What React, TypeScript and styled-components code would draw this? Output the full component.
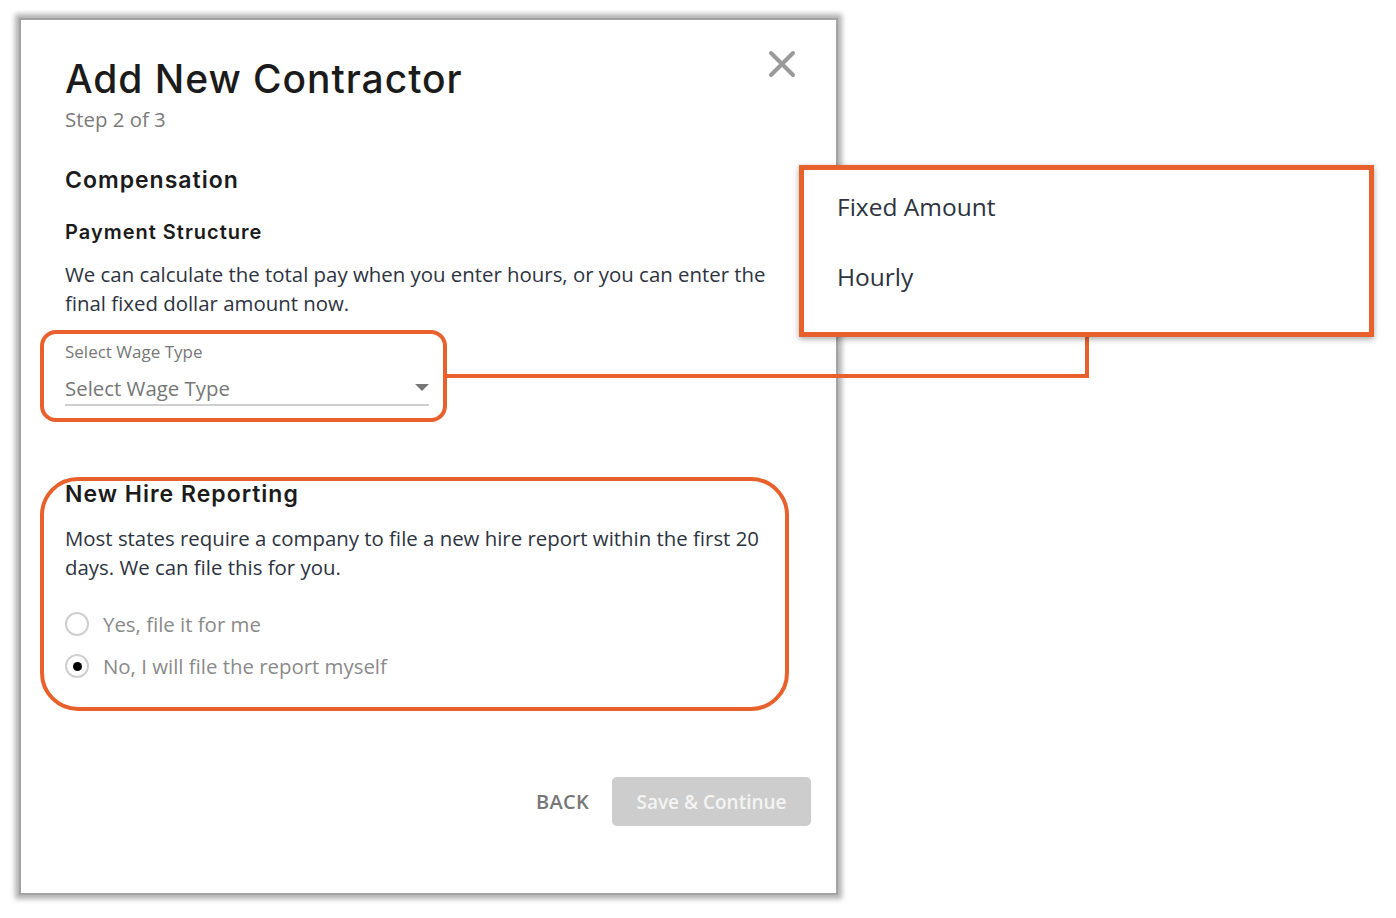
import styled, { createGlobalStyle } from 'styled-components';

const ORANGE = '#e8612c';

const GlobalStyle = createGlobalStyle`
  html, body {
    margin: 0;
    padding: 0;
    background: #ffffff;
  }
  body {
    font-family: 'Open Sans', 'Noto Sans', sans-serif;
  }
`;

export default function App() {
  return (
    <StyledPage>
      <GlobalStyle />
      <StyledModal>
        <StyledHeader>
          <div>
            <StyledTitle>Add New Contractor</StyledTitle>
            <StyledStep>Step 2 of 3</StyledStep>
          </div>
          <StyledClose aria-label="Close">
            <svg width="28" height="28" viewBox="0 0 28 28">
              <path
                d="M3 3 L25 25 M25 3 L3 25"
                stroke="#9a9a9a"
                strokeWidth="4"
                strokeLinecap="round"
              />
            </svg>
          </StyledClose>
        </StyledHeader>

        <StyledSectionTitle>Compensation</StyledSectionTitle>
        <StyledSubTitle>Payment Structure</StyledSubTitle>
        <StyledText>
          We can calculate the total pay when you enter hours, or you can enter
          the final fixed dollar amount now.
        </StyledText>

        <StyledSelect>
          <span className="label">Select Wage Type</span>
          <div className="value">
            <span>Select Wage Type</span>
            <svg width="14" height="8" viewBox="0 0 14 8">
              <path d="M0 0 L14 0 L7 7 Z" fill="#777" />
            </svg>
          </div>
        </StyledSelect>

        <StyledHireSection>
          <StyledSectionTitle as="h3" className="hire">
            New Hire Reporting
          </StyledSectionTitle>
          <StyledText>
            Most states require a company to file a new hire report within the
            first 20 days. We can file this for you.
          </StyledText>
          <StyledRadios>
            <StyledRadio>
              <StyledDot />
              Yes, file it for me
            </StyledRadio>
            <StyledRadio>
              <StyledDot checked />
              No, I will file the report myself
            </StyledRadio>
          </StyledRadios>
        </StyledHireSection>

        <StyledActions>
          <StyledBack>BACK</StyledBack>
          <StyledSave disabled>Save &amp; Continue</StyledSave>
        </StyledActions>
      </StyledModal>

      <StyledCallout left={40} top={330} width={407} height={92} radius={16} />
      <StyledCallout left={40} top={477} width={749} height={234} radius={38} />
      <StyledConnector />
      <StyledMenu>
        <li>Fixed Amount</li>
        <li>Hourly</li>
      </StyledMenu>
    </StyledPage>
  );
}

const StyledPage = styled.div`
  position: relative;
  width: 1396px;
  height: 918px;
  padding: 20px 0 0 21px;
  box-sizing: border-box;
  overflow: hidden;
`;

const StyledModal = styled.div`
  width: 815px;
  height: 873px;
  box-sizing: border-box;
  background: #ffffff;
  box-shadow: 0 0 0 2px #a3a3a3, 0 0 5px 6px rgba(0, 0, 0, 0.3);
  padding: 34px 25px 0 44px;
  display: flex;
  flex-direction: column;
  color: #2d3340;
`;

const StyledHeader = styled.div`
  display: flex;
  justify-content: space-between;
  align-items: flex-start;
`;

const StyledTitle = styled.h1`
  margin: 0;
  font-family: Inter, 'Noto Sans', sans-serif;
  font-weight: 500;
  font-size: 39px;
  line-height: 50px;
  letter-spacing: 0.95px;
  color: #1b1b1b;
`;

const StyledStep = styled.p`
  margin: 1px 0 0;
  font-size: 20.4px;
  line-height: 28px;
  color: #7a7a7a;
`;

const StyledClose = styled.button`
  border: none;
  background: none;
  padding: 0;
  margin: -4px 15px 0 0;
  width: 28px;
  height: 28px;
  cursor: pointer;
`;

const StyledSectionTitle = styled.h2`
  margin: 32px 0 0;
  font-family: Inter, 'Noto Sans', sans-serif;
  font-weight: 600;
  font-size: 23px;
  line-height: 30px;
  letter-spacing: 1px;
  color: #1b1b1b;

  &.hire {
    margin: 0;
  }
`;

const StyledSubTitle = styled.h3`
  margin: 24px 0 0;
  font-family: Inter, 'Noto Sans', sans-serif;
  font-weight: 600;
  font-size: 20px;
  line-height: 26px;
  letter-spacing: 1px;
  color: #1b1b1b;
`;

const StyledText = styled.p`
  margin: 15px 0 0;
  font-size: 20.4px;
  line-height: 29px;
  color: #2d3340;
  max-width: 712px;
`;

const StyledSelect = styled.div`
  margin-top: 23px;
  width: 364px;
  display: flex;
  flex-direction: column;

  .label {
    font-size: 17px;
    line-height: 22px;
    color: #777;
  }

  .value {
    margin-top: 11px;
    display: flex;
    justify-content: space-between;
    align-items: center;
    font-size: 20.4px;
    line-height: 28px;
    color: #777;
    padding-bottom: 2px;
    border-bottom: 2px solid #cfcfcf;
  }
`;

const StyledHireSection = styled.div`
  margin-top: 73px;
  display: flex;
  flex-direction: column;

  p {
    margin-top: 15px;
  }
`;

const StyledRadios = styled.div`
  margin-top: 28px;
  display: flex;
  flex-direction: column;
  gap: 14px;
`;

const StyledRadio = styled.label`
  display: flex;
  align-items: center;
  gap: 14px;
  font-size: 20.4px;
  line-height: 28px;
  color: #8a8a8a;
`;

const StyledDot = styled.span<{ checked?: boolean }>`
  width: 24px;
  height: 24px;
  box-sizing: border-box;
  border-radius: 50%;
  border: 2px solid #cfcfcf;
  display: flex;
  align-items: center;
  justify-content: center;

  &::after {
    content: '';
    width: 9px;
    height: 9px;
    border-radius: 50%;
    background: ${(p) => (p.checked ? '#000' : 'transparent')};
  }
`;

const StyledActions = styled.div`
  margin-top: 97px;
  display: flex;
  justify-content: flex-end;
  align-items: center;
  gap: 23px;
`;

const StyledBack = styled.button`
  border: none;
  background: none;
  padding: 0;
  font-family: 'Open Sans', sans-serif;
  font-weight: 600;
  font-size: 20px;
  color: #777;
  letter-spacing: 0.3px;
`;

const StyledSave = styled.button`
  width: 199px;
  height: 49px;
  border: none;
  border-radius: 5px;
  background: #cdcdcd;
  color: #f4f4f4;
  font-family: 'Open Sans', sans-serif;
  font-weight: 600;
  font-size: 19px;
`;

const StyledCallout = styled.div<{
  left: number;
  top: number;
  width: number;
  height: number;
  radius: number;
}>`
  position: absolute;
  left: ${(p) => p.left}px;
  top: ${(p) => p.top}px;
  width: ${(p) => p.width}px;
  height: ${(p) => p.height}px;
  border: 4px solid ${ORANGE};
  border-radius: ${(p) => p.radius}px;
  box-sizing: border-box;
  pointer-events: none;
`;

const StyledConnector = styled.div`
  position: absolute;
  left: 446px;
  top: 334px;
  width: 643px;
  height: 44px;
  box-sizing: border-box;
  border-right: 4px solid ${ORANGE};
  border-bottom: 4px solid ${ORANGE};
`;

const StyledMenu = styled.ul`
  position: absolute;
  left: 799px;
  top: 165px;
  width: 575px;
  height: 172px;
  box-sizing: border-box;
  margin: 0;
  padding: 1px 0 0 33px;
  list-style: none;
  background: #ffffff;
  border: 5px solid ${ORANGE};
  box-shadow: 0 2px 6px rgba(0, 0, 0, 0.35);

  li {
    height: 70px;
    display: flex;
    align-items: center;
    font-size: 24.5px;
    color: #2d3340;
  }
`;
